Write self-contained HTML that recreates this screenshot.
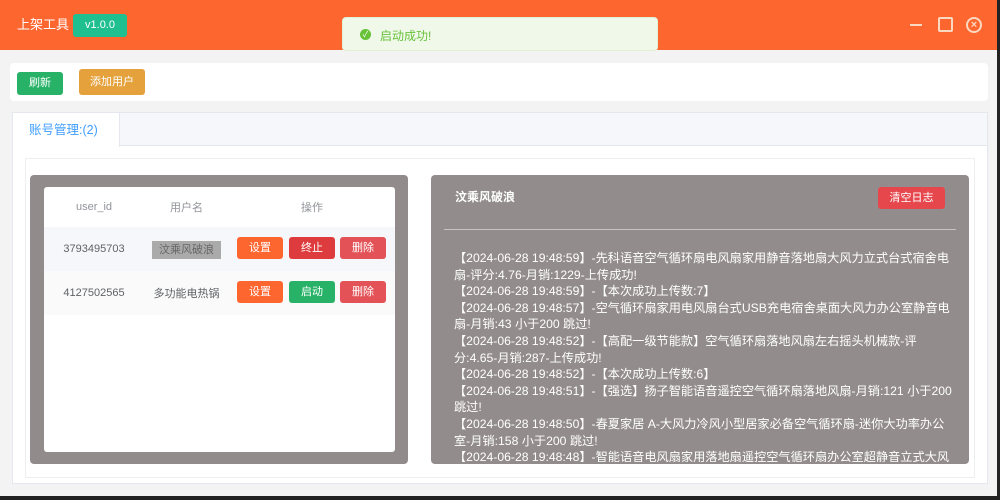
<!DOCTYPE html>
<html><head><meta charset="utf-8"><style>
*{margin:0;padding:0;box-sizing:border-box}
body{width:1000px;height:500px;background:#f3f3f3;font-family:"Liberation Sans","Noto Sans CJK SC",sans-serif;position:relative;overflow:hidden}
.hd{position:absolute;left:0;top:0;width:1000px;height:50px;background:#fe6630}
.abs{position:absolute}
.btn{position:absolute;color:#fff;font-size:11px;text-align:center;border-radius:3px}
.log{position:absolute;left:454px;top:250px;width:505px;color:#fff;font-size:12.2px;line-height:16.6px;height:212px;overflow:hidden}
td{text-align:center}
</style></head><body>
<div class="hd"></div>
<div class="abs" style="left:17px;top:16px;color:#fff;font-size:13px;line-height:18px">上架工具</div>
<div class="abs" style="left:73px;top:14px;width:54px;height:23px;background:#1fbf8f;border-radius:3px;color:#fff;font-size:11px;text-align:center;line-height:23px">v1.0.0</div>
<div class="abs" style="left:342px;top:17px;width:316px;height:34px;background:#f0f8ea;border:1px solid #e1f1d6;border-radius:4px"></div>
<div class="abs" style="left:360px;top:29px;width:11px;height:11px;border-radius:50%;background:#67c23a;color:#fff;font-size:8px;line-height:11px;text-align:center">✓</div>
<div class="abs" style="left:380px;top:27px;color:#67c23a;font-size:12px">启动成功!</div>
<div class="abs" style="left:910px;top:24px;width:12px;height:2px;background:#fbd9c0"></div>
<div class="abs" style="left:938px;top:17px;width:15px;height:15px;border:2px solid #fbd9c0;border-radius:2px"></div>
<div class="abs" style="left:966px;top:17px;width:16px;height:16px;border:2px solid #fbd9c0;border-radius:50%;color:#fbd9c0;font-size:11px;line-height:12px;text-align:center;font-weight:bold">×</div>
<div class="abs" style="left:997px;top:0;width:3px;height:500px;background:#222"></div>
<div class="abs" style="left:0;top:496px;width:1000px;height:4px;background:#222"></div>

<div class="abs" style="left:10px;top:63px;width:978px;height:38px;background:#fff;border-radius:4px"></div>
<div class="btn" style="left:17px;top:72px;width:46px;height:23px;line-height:23px;background:#27b267">刷新</div>
<div class="btn" style="left:79px;top:69px;width:66px;height:26px;line-height:26px;background:#e5a13b">添加用户</div>

<div class="abs" style="left:12px;top:112px;width:976px;height:372px;background:#fff;border:1px solid #e4e7ed"></div>
<div class="abs" style="left:13px;top:113px;width:974px;height:33px;background:#f5f7fa;border-bottom:1px solid #e4e7ed"></div>
<div class="abs" style="left:13px;top:113px;width:107px;height:34px;background:#fff;border-right:1px solid #e4e7ed;color:#409eff;font-size:12.5px;line-height:34px;padding-left:16px">账号管理:(2)</div>
<div class="abs" style="left:25px;top:158px;width:950px;height:320px;border:1px solid #eee"></div>

<div class="abs" style="left:30px;top:175px;width:378px;height:289px;background:#928b8b;border-radius:4px"></div>
<div class="abs" style="left:44px;top:187px;width:351px;height:265px;background:#fff;border-radius:3px"></div>
<table class="abs" style="left:44px;top:187px;width:351px;border-collapse:collapse;font-size:11px;color:#606266">
<tr style="height:40px;color:#909399"><td style="width:100px">user_id</td><td style="width:85px">用户名</td><td>操作</td></tr>
<tr style="height:44px;background:#f5f7fa"><td>3793495703</td><td><span style="background:#aaa;color:#666;padding:3px 7px">汶乘风破浪</span></td><td></td></tr>
<tr style="height:44px;background:#fafafa"><td>4127502565</td><td>多功能电热锅</td><td></td></tr>
</table>
<div class="btn" style="left:237px;top:237px;width:46px;height:22px;line-height:22px;background:#fe6630">设置</div>
<div class="btn" style="left:289px;top:237px;width:46px;height:22px;line-height:22px;background:#dd3b3d">终止</div>
<div class="btn" style="left:340px;top:237px;width:46px;height:22px;line-height:22px;background:#e35257">删除</div>
<div class="btn" style="left:237px;top:281px;width:46px;height:22px;line-height:22px;background:#fe6630">设置</div>
<div class="btn" style="left:289px;top:281px;width:46px;height:22px;line-height:22px;background:#27b267">启动</div>
<div class="btn" style="left:340px;top:281px;width:46px;height:22px;line-height:22px;background:#e35257">删除</div>

<div class="abs" style="left:431px;top:175px;width:538px;height:289px;background:#938c8c;border-radius:4px"></div>
<div class="abs" style="left:455px;top:188px;color:#fff;font-size:12px;font-weight:bold">汶乘风破浪</div>
<div class="btn" style="left:878px;top:187px;width:67px;height:22px;line-height:22px;background:#e5474d">清空日志</div>
<div class="abs" style="left:444px;top:229px;width:512px;height:1px;background:#c8c3c3"></div>
<div class="log">【2024-06-28 19:48:59】-先科语音空气循环扇电风扇家用静音落地扇大风力立式台式宿舍电扇-评分:4.76-月销:1229-上传成功!<br>【2024-06-28 19:48:59】-【本次成功上传数:7】<br>【2024-06-28 19:48:57】-空气循环扇家用电风扇台式USB充电宿舍桌面大风力办公室静音电扇-月销:43 小于200 跳过!<br>【2024-06-28 19:48:52】-【高配一级节能款】空气循环扇落地风扇左右摇头机械款-评分:4.65-月销:287-上传成功!<br>【2024-06-28 19:48:52】-【本次成功上传数:6】<br>【2024-06-28 19:48:51】-【强选】扬子智能语音遥控空气循环扇落地风扇-月销:121 小于200 跳过!<br>【2024-06-28 19:48:50】-春夏家居 A-大风力冷风小型居家必备空气循环扇-迷你大功率办公室-月销:158 小于200 跳过!<br>【2024-06-28 19:48:48】-智能语音电风扇家用落地扇遥控空气循环扇办公室超静音立式大风</div>
</body></html>
